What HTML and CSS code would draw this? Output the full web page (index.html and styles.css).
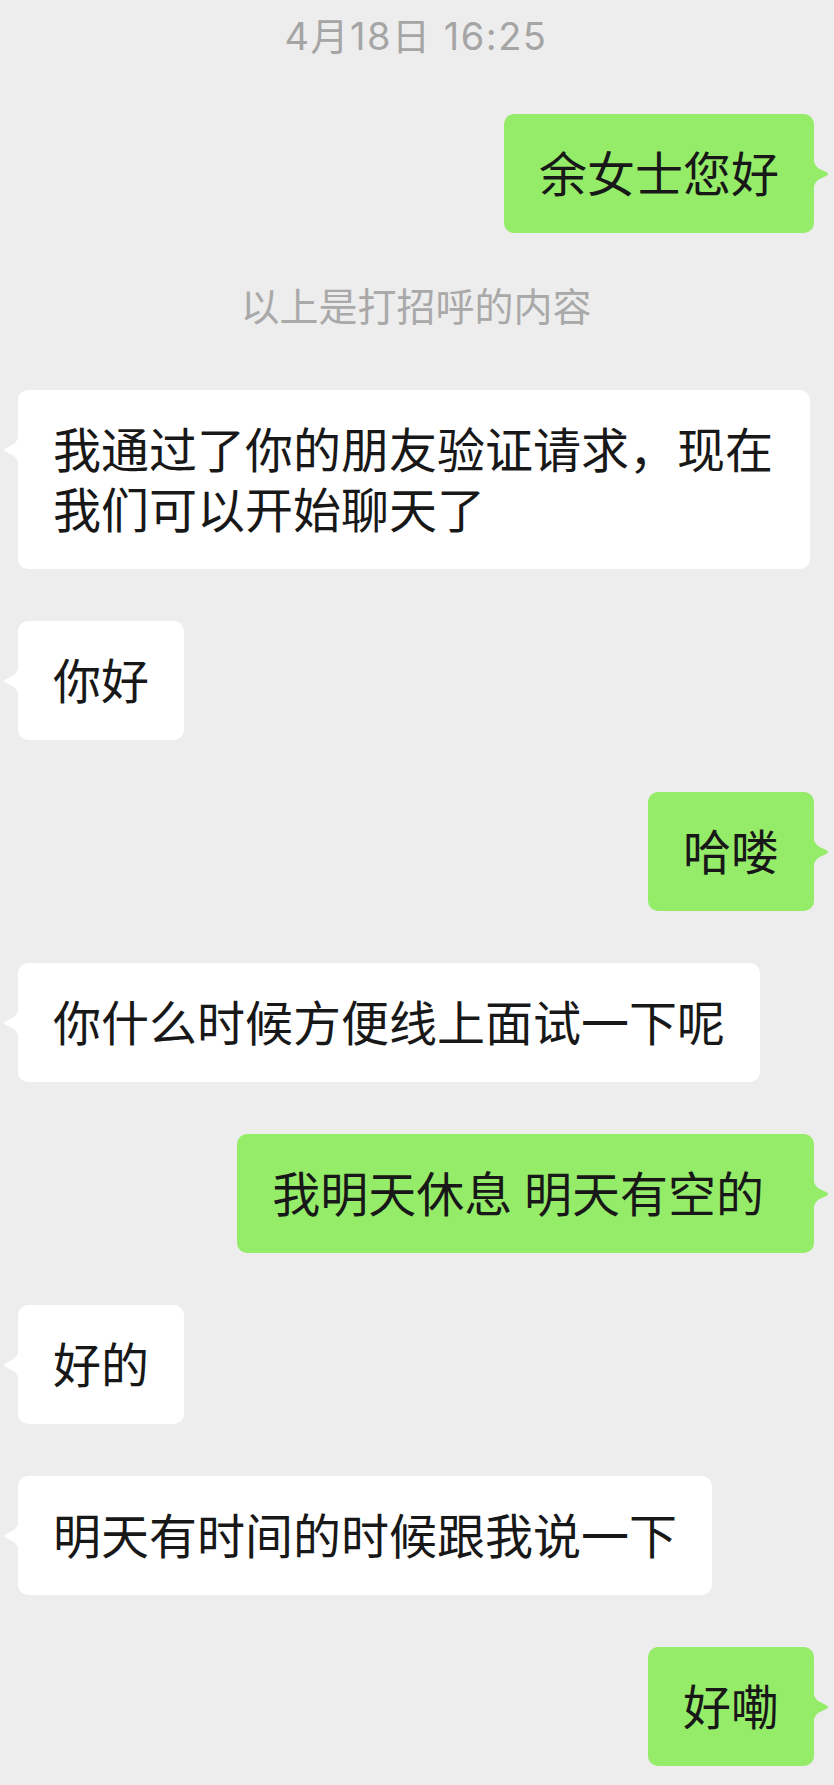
FILE: index.html
```html
<!DOCTYPE html>
<html lang="zh-CN">
<head>
<meta charset="utf-8">
<title>聊天</title>
<link rel="stylesheet" href="styles.css">
</head>
<body>
<div class="chat">
  <div class="time">4月18日 16:25</div>

  <div class="row right first"><div class="bubble green">余女士您好</div></div>

  <div class="system">以上是打招呼的内容</div>

  <div class="row left after-system"><div class="bubble white">我通过了你的朋友验证请求，现在我们可以开始聊天了</div></div>

  <div class="row left"><div class="bubble white">你好</div></div>

  <div class="row right"><div class="bubble green">哈喽</div></div>

  <div class="row left"><div class="bubble white">你什么时候方便线上面试一下呢</div></div>

  <div class="row right"><div class="bubble green spaced">我明天休息 明天有空的</div></div>

  <div class="row left"><div class="bubble white">好的</div></div>

  <div class="row left"><div class="bubble white">明天有时间的时候跟我说一下</div></div>

  <div class="row right"><div class="bubble green">好嘞</div></div>
</div>
</body>
</html>
```

FILE: styles.css
```css
html, body {
  margin: 0;
  padding: 0;
  background: #ededed;
}

.chat {
  padding: 12px 20px 17px 18px;
  font-family: "Noto Sans CJK SC", sans-serif;
}

.time {
  font-family: Inter, "Noto Sans CJK SC", sans-serif;
  font-size: 38px;
  line-height: 48px;
  letter-spacing: 1.5px;
  color: #a5a5a5;
  text-align: center;
}

.system {
  margin-top: 47px;
  font-size: 39px;
  line-height: 48px;
  color: #a9a9a9;
  text-align: center;
}

.row {
  display: flex;
  margin-top: 52px;
}

.row.first {
  margin-top: 54px;
}

.row.after-system {
  margin-top: 62px;
}

.row.left {
  justify-content: flex-start;
}

.row.right {
  justify-content: flex-end;
}

.bubble {
  position: relative;
  box-sizing: border-box;
  max-width: 792px;
  padding: 26.5px 35px 32.5px;
  border-radius: 10px;
  font-size: 48px;
  line-height: 60px;
  color: #181818;
}

.bubble.white {
  background: #ffffff;
}

.bubble.green {
  background: #95ec69;
}

.bubble.spaced {
  word-spacing: 1px;
  padding-right: 50px;
}

.bubble::before {
  content: "";
  position: absolute;
  top: 40px;
  width: 16px;
  height: 40px;
}

.bubble.green::before {
  right: -15px;
  background: #95ec69;
  clip-path: path("M0 0 C0 8 2 11 5 14 L14 18.5 Q16 20 14 21.5 L5 26 C2 29 0 32 0 40 Z");
}

.bubble.white::before {
  left: -15px;
  background: #ffffff;
  clip-path: path("M16 0 C16 8 14 11 11 14 L2 18.5 Q0 20 2 21.5 L11 26 C14 29 16 32 16 40 Z");
}
```
